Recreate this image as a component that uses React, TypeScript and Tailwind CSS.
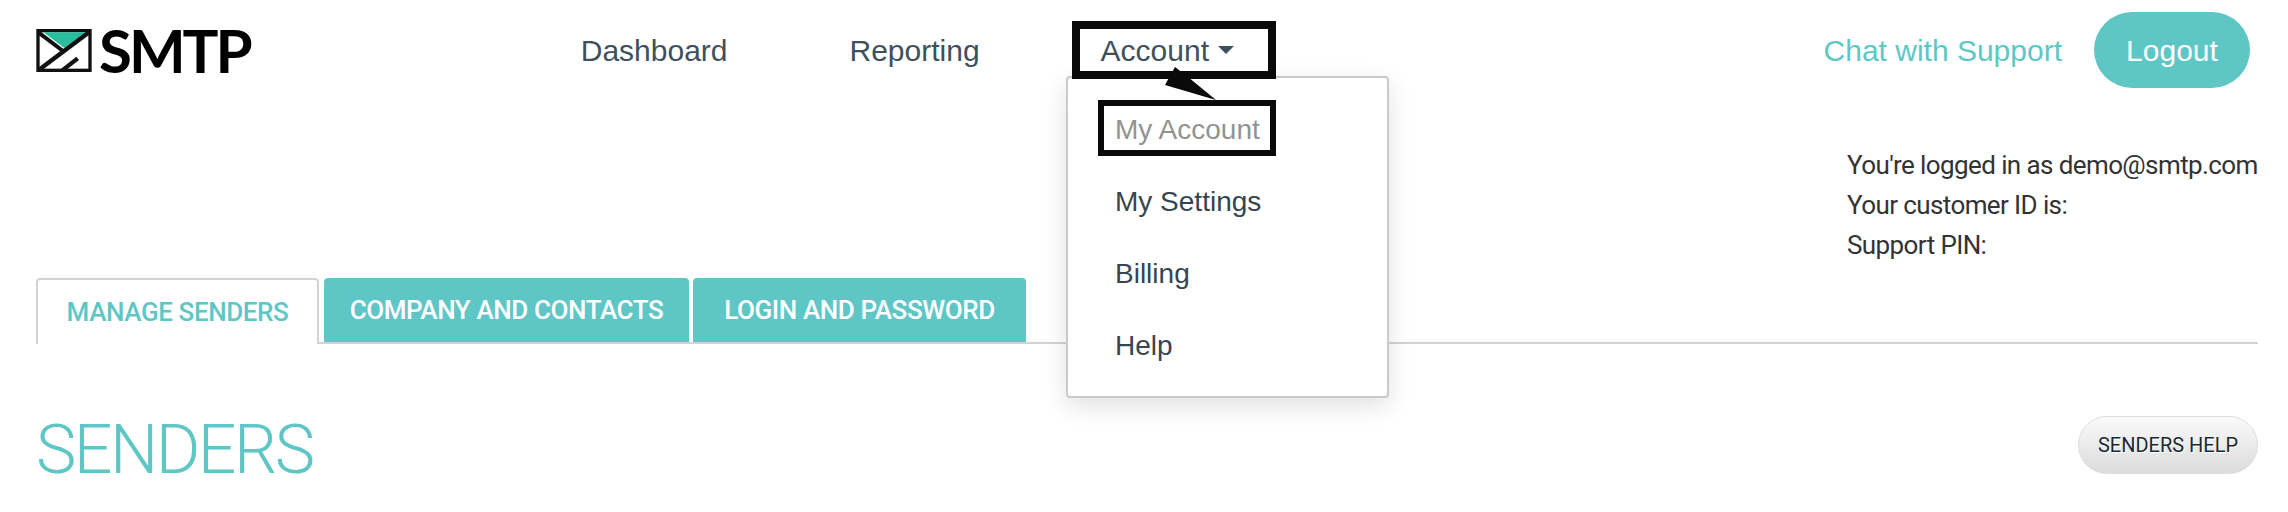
import React from "react";

const teal = "text-[#5ec7c6]";
const din = "font-['Roboto',sans-serif]";
const helv = "font-['Liberation_Sans',sans-serif]";

const Logo = () => (
  <div className="flex items-center gap-[7px]">
    <svg width="56" height="43" viewBox="0 0 166 129">
      <rect x="5" y="5" width="156" height="119" fill="#fff" stroke="#111" strokeWidth="10" />
      <path d="M21 10H149L84 57Z" fill="#2bbd9e" />
      <path d="M6 124L160 8" stroke="#111" strokeWidth="13" fill="none" />
      <path d="M6 10L80 66" stroke="#111" strokeWidth="12" fill="none" />
      <path d="M78 124L124 88" stroke="#111" strokeWidth="13" fill="none" />
    </svg>
    <span className="font-['Lato',sans-serif] font-bold text-[60px] leading-none text-black tracking-[-3px]">SMTP</span>
  </div>
);

const MenuItem = ({ label }: { label: string }) => (
  <a className="block h-[72px] leading-[72px] pl-[47px] text-[28px] text-[#36454f]">{label}</a>
);

export default function App() {
  return (
    <div className={`relative w-[2288px] h-[512px] overflow-hidden bg-white ${helv}`}>
      <header className="flex items-center h-[100px] pl-[36px] pr-[38px]">
        <Logo />
        <nav className="flex items-center ml-[331px] text-[30px] text-[#3f505d]">
          <a>Dashboard</a>
          <a className="ml-[122px]">Reporting</a>
          <div className="relative ml-[92px] w-[204px] h-[58px] border-[8px] border-[#0a0a0a] bg-white flex items-center pl-[21px] z-10">
            <span className="flex items-center">
              Account
              <span className="ml-[9px] w-0 h-0 border-x-[8px] border-x-transparent border-t-[8px] border-t-[#3f505d]" />
            </span>
          </div>
        </nav>
        <a className={`ml-auto text-[30px] ${teal}`}>Chat with Support</a>
        <button className="ml-[32px] w-[156px] h-[76px] rounded-full bg-[#5ec7c6] text-white text-[30px]">Logout</button>
      </header>

      <div className={`flex justify-end pr-[30px] pt-[45px] h-[178px] text-[26px] tracking-[-0.6px] leading-[40px] text-[#333] ${din}`}>
        <div className="w-[411px] whitespace-nowrap">
          <p>You're logged in as demo@smtp.com</p>
          <p>Your customer ID is:</p>
          <p>Support PIN:</p>
        </div>
      </div>

      <div className={`flex ml-[36px] mr-[30px] h-[66px] border-b-2 border-[#d2d2d2] text-[26px] tracking-[-0.4px] font-medium whitespace-nowrap ${din}`}>
        <div className={`w-[283px] h-[66px] border-2 border-b-0 border-[#d2d2d2] rounded-t-[4px] bg-white flex items-center justify-center ${teal}`}>MANAGE SENDERS</div>
        <div className="ml-[5px] w-[365px] h-[64px] rounded-t-[4px] bg-[#5ec7c6] text-white flex items-center justify-center">COMPANY AND CONTACTS</div>
        <div className="ml-[4px] w-[333px] h-[64px] rounded-t-[4px] bg-[#5ec7c6] text-white flex items-center justify-center">LOGIN AND PASSWORD</div>
      </div>

      <div className="flex items-start justify-between pl-[36px] pr-[30px] pt-[72px]">
        <h1 className={`text-[68px] leading-[68px] tracking-[-2.5px] font-light ${teal} ${din}`}>SENDERS</h1>
        <button className={`w-[180px] h-[58px] rounded-full border border-[#dedede] bg-gradient-to-b from-[#fafafa] to-[#dcdcdc] text-[20px] text-[#1a2a35] [text-shadow:1px_1px_0_#fff] ${din}`}>SENDERS HELP</button>
      </div>

      {/* dropdown sits over the tabs */}
      <div className="absolute left-[1066px] top-[76px] w-[323px] h-[322px] bg-white border-2 border-[#cacaca] rounded-[4px] shadow-[0_8px_24px_rgba(0,0,0,0.12)] pt-[16px]">
        <div className="relative h-[72px] flex items-center pl-[47px] text-[28px] text-[#929292]">
          My Account
          <div className="absolute left-[30px] top-[6px] w-[178px] h-[56px] border-[6px] border-[#0a0a0a]" />
        </div>
        <MenuItem label="My Settings" />
        <MenuItem label="Billing" />
        <MenuItem label="Help" />
      </div>

      {/* annotation arrow from the account box to my account */}
      <svg className="absolute left-[1160px] top-[62px] z-20" width="60" height="42" viewBox="0 0 60 42">
        <path d="M15 5L5 23L56 38L28 15Z" fill="#0a0a0a" />
      </svg>
    </div>
  );
}
